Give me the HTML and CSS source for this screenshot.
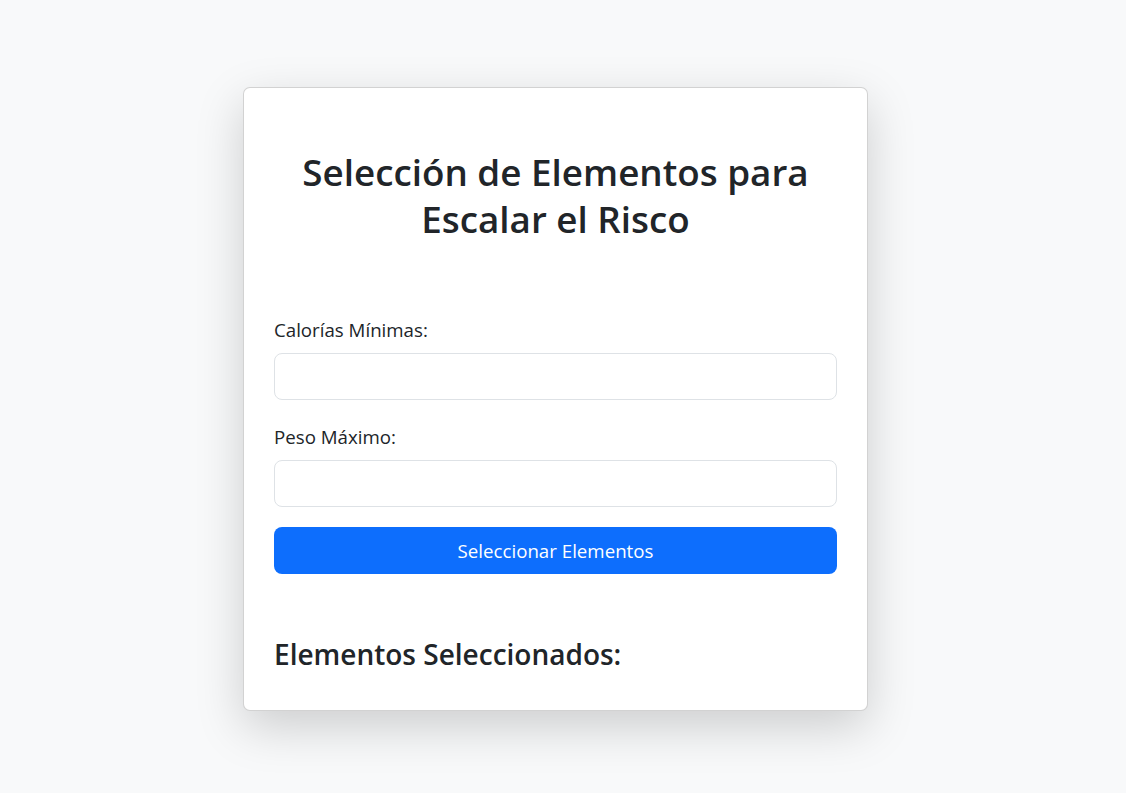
FILE: index.html
```html
<!DOCTYPE html>
<html lang="es">
<head>
<meta charset="utf-8">
<title>Selección de Elementos para Escalar el Risco</title>
<link rel="stylesheet" href="styles.css">
</head>
<body>
<main class="page">
  <section class="card">
    <h1 class="title">Selección de Elementos para Escalar el Risco</h1>
    <form class="form">
      <div class="field">
        <label class="label" for="cal">Calorías Mínimas:</label>
        <input class="input" id="cal" type="number">
      </div>
      <div class="field">
        <label class="label" for="peso">Peso Máximo:</label>
        <input class="input" id="peso" type="number">
      </div>
      <button class="btn" type="button">Seleccionar Elementos</button>
    </form>
    <h3 class="subtitle">Elementos Seleccionados:</h3>
    <ul class="results"></ul>
  </section>
</main>
</body>
</html>
```
FILE: styles.css
```css
* { box-sizing: border-box; }
html, body { margin: 0; padding: 0; }
body {
  background: #f8f9fa;
  color: #212529;
  font-family: "Open Sans", "Noto Sans", sans-serif;
  min-height: 793px;
}
.page {
  display: flex;
  justify-content: center;
  align-items: flex-start;
  padding: 87px 15px 0 0;
}
.card {
  width: 625px;
  background: #fff;
  border: 1px solid rgba(0,0,0,.175);
  border-radius: 7px;
  box-shadow: 0 1rem 3rem rgba(0,0,0,.175);
  padding: 61px 30px 38px;
  display: flex;
  flex-direction: column;
}
.title {
  margin: 0;
  text-align: center;
  font-size: 36.8px;
  font-weight: 600;
  line-height: 47px;
}
.form {
  margin-top: 73px;
  display: flex;
  flex-direction: column;
}
.field {
  display: flex;
  flex-direction: column;
  gap: 9px;
  margin-bottom: 23px;
}
.field:nth-child(2) { margin-bottom: 20px; }
.label {
  font-size: 18.7px;
  line-height: 28px;
}
.input {
  height: 47px;
  border: 1px solid #dee2e6;
  border-radius: 8px;
  background: #fff;
  font: inherit;
  font-size: 18.7px;
  padding: 0 16px;
}
.btn {
  height: 47px;
  border: 0;
  border-radius: 8px;
  background: #0d6efd;
  color: #fff;
  font-family: inherit;
  font-size: 18.7px;
  cursor: pointer;
}
.subtitle {
  margin: 62px 0 0;
  font-size: 28px;
  font-weight: 600;
  line-height: 36px;
}
.results {
  margin: 0;
  padding: 0;
  list-style: none;
}
```
